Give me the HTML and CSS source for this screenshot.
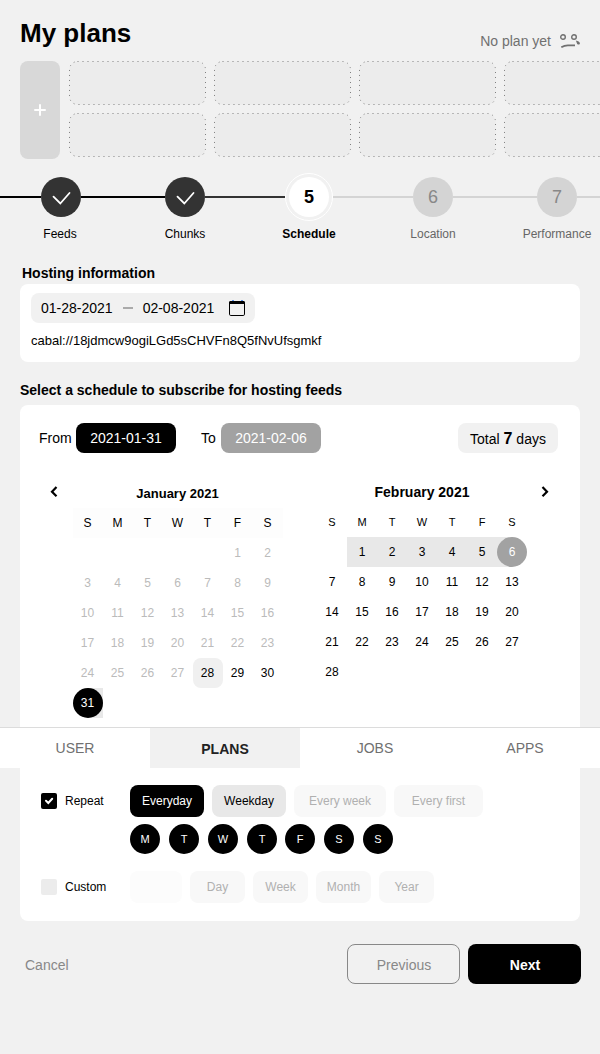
FILE: index.html
```html
<!DOCTYPE html>
<html lang="en">
<head>
<meta charset="utf-8">
<title>My plans</title>
<link rel="stylesheet" href="styles.css">
</head>
<body>
<svg class="defs" width="0" height="0">
  <symbol id="slot" viewBox="0 0 137 44"><rect x="0.5" y="0.5" width="136" height="43" rx="8" fill="#ececec" stroke="#808080" stroke-dasharray="1 4"/></symbol>
  <symbol id="tick" viewBox="0 0 40 40"><path d="M12.500 19.600l6.800 6.900 9.200-10.500" fill="none" stroke="#fff" stroke-width="1.800" stroke-linecap="round"/></symbol>
</svg>
<div class="app">
  <header class="header">
    <h1 class="title">My plans</h1>
    <div class="status">No plan yet
      <svg class="face" width="20" height="15" viewBox="0 0 20 15" fill="none" stroke="#707070" stroke-width="1.400"><circle cx="3" cy="3" r="2.300"/><circle cx="14" cy="3" r="2.300"/><path d="M1.300 13.200c2-1.200 4-1.900 6.500-1.900h7.200" stroke-width="1.800"/><path d="M15.800 6.600c2.300.4 3.900 1.400 4.100 2.600.1 1.400-1.700 1.700-2.700.7-.5-.5-.4-1.400-1.400-3.300z" fill="#707070" stroke="none"/></svg>
    </div>
  </header>

  <section class="plans">
    <button class="add"><svg width="12" height="12" viewBox="0 0 12 12"><path d="M6 1v10M1 6h10" stroke="#fff" stroke-width="2" stroke-linecap="round"/></svg></button>
    <div class="slots">
      <svg><use href="#slot"/></svg><svg><use href="#slot"/></svg><svg><use href="#slot"/></svg><svg><use href="#slot"/></svg>
      <svg><use href="#slot"/></svg><svg><use href="#slot"/></svg><svg><use href="#slot"/></svg><svg><use href="#slot"/></svg>
    </div>
  </section>

  <ol class="steps">
    <li class="step done"><div class="rail"><i class="bar"></i><span class="dot"><svg width="40" height="40"><use href="#tick"/></svg></span><i class="bar"></i></div><span class="step-name feeds">Feeds</span></li>
    <li class="step done"><div class="rail"><i class="bar"></i><span class="dot"><svg width="40" height="40"><use href="#tick"/></svg></span><i class="bar soft"></i></div><span class="step-name">Chunks</span></li>
    <li class="step current"><div class="rail"><i class="bar soft"></i><span class="ring"><span class="dot">5</span></span><i class="bar pale"></i></div><span class="step-name">Schedule</span></li>
    <li class="step todo"><div class="rail"><i class="bar pale"></i><span class="dot">6</span><i class="bar pale"></i></div><span class="step-name">Location</span></li>
    <li class="step todo"><div class="rail"><i class="bar pale"></i><span class="dot">7</span><i class="bar pale"></i></div><span class="step-name">Performance</span></li>
  </ol>

  <h2 class="heading hosting-heading">Hosting information</h2>
  <section class="card hosting">
    <div class="range"><span>01-28-2021</span><i class="dash"></i><span>02-08-2021</span>
      <svg class="cal-icon" width="16" height="16" viewBox="0 0 16 16"><path d="M0 4V2.500Q0 1 1.500 1h13Q16 1 16 2.500V4z"/><rect x=".5" y="1.500" width="15" height="14" rx="1.300" fill="none" stroke="#000"/><rect x="3" y="0" width="2" height="1" fill="#5b93ec"/><rect x="12" y="0" width="2" height="1" fill="#5b93ec"/></svg>
    </div>
    <p class="address">cabal://18jdmcw9ogiLGd5sCHVFn8Q5fNvUfsgmkf</p>
  </section>

  <h2 class="heading">Select a schedule to subscribe for hosting feeds</h2>
  <section class="card schedule">
    <div class="period">
      <span class="from">From</span><span class="date start">2021-01-31</span>
      <span class="to">To</span><span class="date end">2021-02-06</span>
      <span class="total">Total&nbsp;<b>7</b>&nbsp;days</span>
    </div>

    <div class="calendars">
      <svg class="arrow prev" width="8" height="12" viewBox="0 0 8 12"><path d="M6.500 1L2 5.700l4.500 4.600" fill="none" stroke="#000" stroke-width="2.200"/></svg>
      <div class="month january">
        <h3 class="month-name">January 2021</h3>
        <div class="days names"><span>S</span><span>M</span><span>T</span><span>W</span><span>T</span><span>F</span><span>S</span></div>
        <div class="days">
          <span class="first-fri past">1</span><span class="past">2</span>
          <span class="past">3</span><span class="past">4</span><span class="past">5</span><span class="past">6</span><span class="past">7</span><span class="past">8</span><span class="past">9</span>
          <span class="past">10</span><span class="past">11</span><span class="past">12</span><span class="past">13</span><span class="past">14</span><span class="past">15</span><span class="past">16</span>
          <span class="past">17</span><span class="past">18</span><span class="past">19</span><span class="past">20</span><span class="past">21</span><span class="past">22</span><span class="past">23</span>
          <span class="past">24</span><span class="past">25</span><span class="past">26</span><span class="past">27</span><span class="today">28</span><span>29</span><span>30</span>
          <span class="edge first"><b>31</b></span>
        </div>
      </div>
      <div class="month february">
        <h3 class="month-name">February 2021</h3>
        <div class="days names"><span>S</span><span>M</span><span>T</span><span>W</span><span>T</span><span>F</span><span>S</span></div>
        <div class="days">
          <span class="first-mon picked">1</span><span class="picked">2</span><span class="picked">3</span><span class="picked">4</span><span class="picked">5</span><span class="edge last"><b>6</b></span>
          <span>7</span><span>8</span><span>9</span><span>10</span><span>11</span><span>12</span><span>13</span>
          <span>14</span><span>15</span><span>16</span><span>17</span><span>18</span><span>19</span><span>20</span>
          <span>21</span><span>22</span><span>23</span><span>24</span><span>25</span><span>26</span><span>27</span>
          <span>28</span>
        </div>
      </div>
      <svg class="arrow next-month" width="8" height="12" viewBox="0 0 8 12"><path d="M1.500 1L6 5.700l-4.500 4.600" fill="none" stroke="#000" stroke-width="2.200"/></svg>
    </div>

    <div class="option repeat">
      <span class="check on"><svg width="16" height="16" viewBox="0 0 16 16"><path d="M5 7.800l2.300 2.200 3.900-4.200" fill="none" stroke="#fff" stroke-width="2" stroke-linecap="round"/></svg></span>
      <span class="option-name">Repeat</span>
      <span class="chip black">Everyday</span><span class="chip grey">Weekday</span><span class="chip wide">Every week</span><span class="chip wider">Every first</span>
    </div>
    <div class="weekdays"><span>M</span><span>T</span><span>W</span><span>T</span><span class="friday">F</span><span>S</span><span>S</span></div>
    <div class="option">
      <span class="check"></span>
      <span class="option-name">Custom</span>
      <span class="chip unit blank"></span><span class="chip unit">Day</span><span class="chip unit">Week</span><span class="chip unit">Month</span><span class="chip unit">Year</span>
    </div>
  </section>

  <footer class="actions">
    <span class="cancel">Cancel</span><button class="btn outline">Previous</button><button class="btn solid">Next</button>
  </footer>

  <nav class="tabs"><a>USER</a><a class="active">PLANS</a><a>JOBS</a><a>APPS</a></nav>
</div>
</body>
</html>
```

FILE: styles.css
```css
* { box-sizing: border-box; margin: 0; padding: 0; }
body { background: #f1f1f1; color: #000; font: 14px/20px "Liberation Sans", Arial, sans-serif; }
button { border: 0; font: inherit; }
svg { display: block; flex: none; }
.defs { position: absolute; }
.app { position: relative; width: 600px; height: 1054px; overflow: hidden; }

.header { display: flex; justify-content: space-between; height: 61px; padding: 18px 20px 0; }
.title { font-size: 26px; line-height: 30px; }
.status { display: flex; gap: 9px; padding-top: 13px; color: #707070; }
.face { margin-top: 3px; }

.plans { display: flex; gap: 9px; height: 98px; padding-left: 20px; }
.add { display: grid; place-items: center; flex: none; width: 40px; height: 98px; border-radius: 8px; background: #d8d8d8; }
.add svg { margin-right: 1px; }
.slots { display: grid; grid-template-columns: repeat(4, 137px); grid-auto-rows: 44px; gap: 8px; }
.slots svg { width: 137px; height: 44px; }

.steps { display: grid; grid-template-columns: repeat(5, 124px); margin: 14px 0 0 -1px; height: 90px; list-style: none; }
.rail { display: flex; align-items: center; height: 48px; }
.bar { flex: 1; height: 2px; background: #000; }
.bar.soft { background: #333; }
.bar.pale { background: #d4d4d4; }
.dot { display: grid; place-items: center; width: 40px; height: 40px; border-radius: 50%; background: #d4d4d4; color: #888; font-size: 18px; }
.done .dot { background: #333; }
.ring { display: grid; place-items: center; width: 48px; height: 48px; border: 1px solid #fff; border-radius: 50%; }
.current .dot { background: #fff; color: #000; font-weight: bold; }
.step-name { display: block; padding-top: 3px; text-align: center; font-size: 12px; }
.feeds { padding-right: 2px; }
.current .step-name { font-weight: bold; }
.todo .step-name { color: #666; }

.heading { margin-left: 20px; font-size: 14px; line-height: 20px; }
.hosting-heading { margin-left: 22px; height: 21px; }
.card { width: 560px; margin-left: 20px; border-radius: 8px; background: #fff; }
.hosting { height: 78px; padding: 9px 11px; margin-bottom: 18px; }
.range { display: flex; align-items: center; width: 224px; height: 30px; padding: 0 10px; border-radius: 8px; background: #f1f1f1; }
.dash { width: 10px; height: 2px; margin: 0 10px; background: #aaa; }
.cal-icon { margin-left: auto; }
.address { margin-top: 8px; font-size: 13px; }

.schedule { height: 516px; margin-top: 5px; padding-top: 18px; }
.period { display: flex; align-items: center; height: 30px; padding: 0 22px 0 19px; }
.from { width: 37px; }
.to { width: 20px; margin-left: 25px; }
.date, .total { display: flex; align-items: center; justify-content: center; width: 100px; height: 30px; border-radius: 8px; color: #fff; }
.start { background: #000; }
.end { background: #a2a2a2; }
.total { margin-left: auto; background: #f1f1f1; color: #000; align-items: baseline; line-height: 31px; }
.total b { font-size: 16px; }

.calendars { display: flex; height: 332px; padding: 29px 31px 0 30px; }
.arrow { margin-top: 4px; }
.month { width: 210px; }
.january { margin-left: 14.500px; }
.february { margin-left: 34.500px; }
.next-month { margin-left: auto; }
.month-name { height: 26px; text-align: center; font-size: 13px; line-height: 24px; }
.february .month-name { height: 25px; font-size: 14px; line-height: 20px; }
.days { display: grid; grid-template-columns: repeat(7, 30px); grid-auto-rows: 30px; text-align: center; font-size: 12px; line-height: 30px; }
.january .names { background: #fdfdfd; }
.february .names { font-size: 11px; }
.first-fri { grid-column: 6; }
.first-mon { grid-column: 2; }
.past { color: #bbb; }
.today { border-radius: 8px; background: #f0f0f0; }
.picked { background: #e8e8e8; }
.edge b { display: block; border-radius: 50%; color: #fff; font-weight: normal; }
.first { background: linear-gradient(90deg, transparent 50%, #e8e8e8 50%); }
.first b { background: #000; }
.last { background: linear-gradient(90deg, #e8e8e8 50%, transparent 50%); }
.last b { background: #a2a2a2; }

.option { display: flex; align-items: center; gap: 8px; height: 32px; padding-left: 21px; font-size: 12px; }
.check { width: 16px; height: 16px; border-radius: 2px; background: #ececec; }
.check.on { background: #000; }
.option-name { width: 57px; }
.chip { width: 74px; height: 32px; border-radius: 8px; background: #f8f8f8; color: #b0b0b0; text-align: center; line-height: 32px; }
.black { background: #000; color: #fff; }
.grey { background: #e8e8e8; color: #000; }
.wide { width: 92px; }
.wider { width: 89px; }
.unit { width: 55px; }
.blank { width: 52px; background: #fcfcfc; }
.weekdays { display: flex; gap: 9px; height: 54px; padding: 7px 0 0 110px; }
.weekdays span { width: 30px; height: 30px; border-radius: 50%; background: #000; color: #fff; text-align: center; font-size: 11px; line-height: 30px; }
.weekdays .friday { margin-left: -1px; }

.actions { display: flex; align-items: center; gap: 8px; padding: 23px 19px 0 25px; }
.cancel { margin-right: auto; padding-top: 2px; color: #888; }
.btn { width: 113px; height: 40px; padding: 2px 0 0 1px; border-radius: 8px; }
.outline { border: 1px solid #888; background: none; color: #888; }
.solid { background: #000; color: #fff; font-weight: bold; }

/* The tab bar floats over the schedule card. */
.tabs { position: absolute; top: 727px; left: 0; display: flex; width: 600px; height: 41px; border-top: 1px solid #dcdcdc; background: #fff; }
.tabs a { flex: 1; padding-top: 10px; color: #707070; text-align: center; }
.tabs .active { padding-top: 11px; background: #f1f1f1; color: #222; font-weight: bold; }
```
